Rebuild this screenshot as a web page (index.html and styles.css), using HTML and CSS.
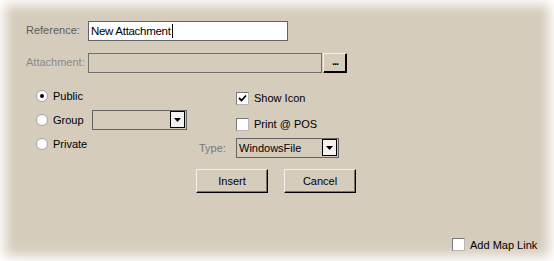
FILE: index.html
```html
<!DOCTYPE html>
<html lang="en">
<head>
    <meta charset="UTF-8">
    <title>Attachment</title>
    <link rel="stylesheet" href="styles.css">
</head>
<body>
    <div class="dialog">
        <div class="row">
            <label class="lbl">Reference:</label>
            <div class="textbox textbox-ref">New Attachment<span class="caret"></span></div>
        </div>

        <div class="row row-attach">
            <label class="lbl lbl-off">Attachment:</label>
            <div class="textbox textbox-off"></div>
            <button class="browse" type="button">...</button>
        </div>

        <div class="options">
            <div class="col-left">
                <div class="opt"><span class="radio on"></span>Public</div>
                <div class="opt">
                    <span class="radio"></span>Group
                    <div class="combo combo-group">
                        <span class="combo-text"></span>
                        <span class="combo-btn"><svg width="7" height="4" viewBox="0 0 7 4"><path d="M0 0h7L3.5 4z" fill="#000"/></svg></span>
                    </div>
                </div>
                <div class="opt"><span class="radio"></span>Private</div>
            </div>

            <div class="col-right">
                <div class="opt opt-check">
                    <span class="check"><svg width="9" height="9" viewBox="0 0 9 9"><path d="M1 4l2.5 2.5L8 1.5" fill="none" stroke="#000" stroke-width="1.8"/></svg></span>Show Icon
                </div>
                <div class="opt opt-check"><span class="check"></span>Print @ POS</div>
                <div class="opt-type">
                    <span class="lbl-type">Type:</span>
                    <div class="combo combo-type">
                        <span class="combo-text">WindowsFile</span>
                        <span class="combo-btn"><svg width="7" height="4" viewBox="0 0 7 4"><path d="M0 0h7L3.5 4z" fill="#000"/></svg></span>
                    </div>
                </div>
            </div>
        </div>

        <div class="actions">
            <button class="btn" type="button">Insert</button>
            <button class="btn" type="button">Cancel</button>
        </div>

        <div class="footer"><span class="check"></span>Add Map Link</div>
    </div>
</body>
</html>
```

FILE: styles.css
```css
body {
    margin: 0;
    padding: 0;
    background-color: #fff;
    font-family: "Liberation Sans", Arial, sans-serif;
    font-size: 11px;
    color: #000;
}

.dialog {
    width: 554px;
    height: 261px;
    box-sizing: border-box;
    padding: 21px 0 10px 26px;
    display: flex;
    flex-direction: column;
    background-color: #d5ccbc;
    box-shadow: inset 0 0 12px 5px #fff;
}

.row {
    display: flex;
    align-items: center;
    height: 20px;
}

.row-attach {
    margin-top: 12px;
}

.lbl {
    width: 62px;
    color: #5c5c5c;
    margin-top: -3px;
}

.lbl-off {
    color: #8a8a8a;
}

.textbox {
    height: 20px;
    box-sizing: border-box;
    border: 1px solid #646464;
    padding: 0 2px;
    display: flex;
    align-items: center;
    font-size: 11.5px;
    letter-spacing: -0.3px;
}

.textbox-ref {
    width: 200px;
    background-color: #fff;
}

.caret {
    width: 1px;
    height: 14px;
    background-color: #000;
    margin-left: 1px;
}

.textbox-off {
    width: 234px;
    background-color: #d5ccbc;
    border-color: #707070;
}

.browse {
    width: 24px;
    height: 20px;
    margin: 0 0 0 1px;
    padding: 0 0 4px;
    background-color: #d5ccbc;
    border: 1px solid;
    border-color: #f4f1ea #000 #000 #f4f1ea;
    box-shadow: inset -1px -1px #000;
    font: bold 11px "Liberation Sans", Arial, sans-serif;
    letter-spacing: -1px;
}

.options {
    display: flex;
    margin-top: 11px;
    height: 74px;
}

.col-left {
    width: 163px;
    padding-left: 10px;
    display: flex;
    flex-direction: column;
}

.opt {
    height: 24px;
    display: flex;
    align-items: center;
}

.radio {
    width: 12px;
    height: 12px;
    box-sizing: border-box;
    border-radius: 50%;
    border: 1px solid #a4a4a4;
    background-color: #fff;
    margin-right: 5px;
    display: flex;
    align-items: center;
    justify-content: center;
}

.radio.on::after {
    content: "";
    width: 4px;
    height: 4px;
    border-radius: 50%;
    background-color: #000;
}

.combo {
    height: 20px;
    box-sizing: border-box;
    border: 1px solid #646464;
    display: flex;
    background-color: #d5ccbc;
}

.combo-group {
    width: 95px;
    margin-left: 8px;
}

.combo-text {
    flex: 1;
    padding-left: 2px;
    display: flex;
    align-items: center;
}

.combo-btn {
    width: 15px;
    height: 17px;
    box-sizing: border-box;
    border: 1px solid #000;
    background-color: #f4f2ee;
    margin-right: 1px;
    display: flex;
    align-items: center;
    justify-content: center;
}

.col-right {
    padding-top: 1px;
    display: flex;
    flex-direction: column;
}

.opt-check {
    height: 26px;
    padding-left: 37px;
}

.check {
    width: 13px;
    height: 13px;
    box-sizing: border-box;
    border: 1px solid #7a7a7a;
    border-right-color: #b8b8b8;
    border-bottom-color: #b8b8b8;
    background-color: #fff;
    margin-right: 5px;
    display: flex;
    align-items: center;
    justify-content: center;
}

.opt-type {
    display: flex;
    align-items: center;
    margin-top: 1px;
}

.lbl-type {
    width: 37px;
    color: #777;
}

.combo-type {
    width: 103px;
}

.actions {
    display: flex;
    gap: 16px;
    margin-top: 11px;
    padding-left: 170px;
}

.btn {
    width: 72px;
    height: 24px;
    padding: 0;
    background-color: #d5ccbc;
    border: 1px solid;
    border-color: #f4f1ea #000 #000 #f4f1ea;
    box-shadow: inset -1px -1px #7a7368;
    font: 11px "Liberation Sans", Arial, sans-serif;
    color: #000;
}

.footer {
    margin-top: auto;
    display: flex;
    align-items: center;
    height: 13px;
    padding-left: 426px;
}
```
